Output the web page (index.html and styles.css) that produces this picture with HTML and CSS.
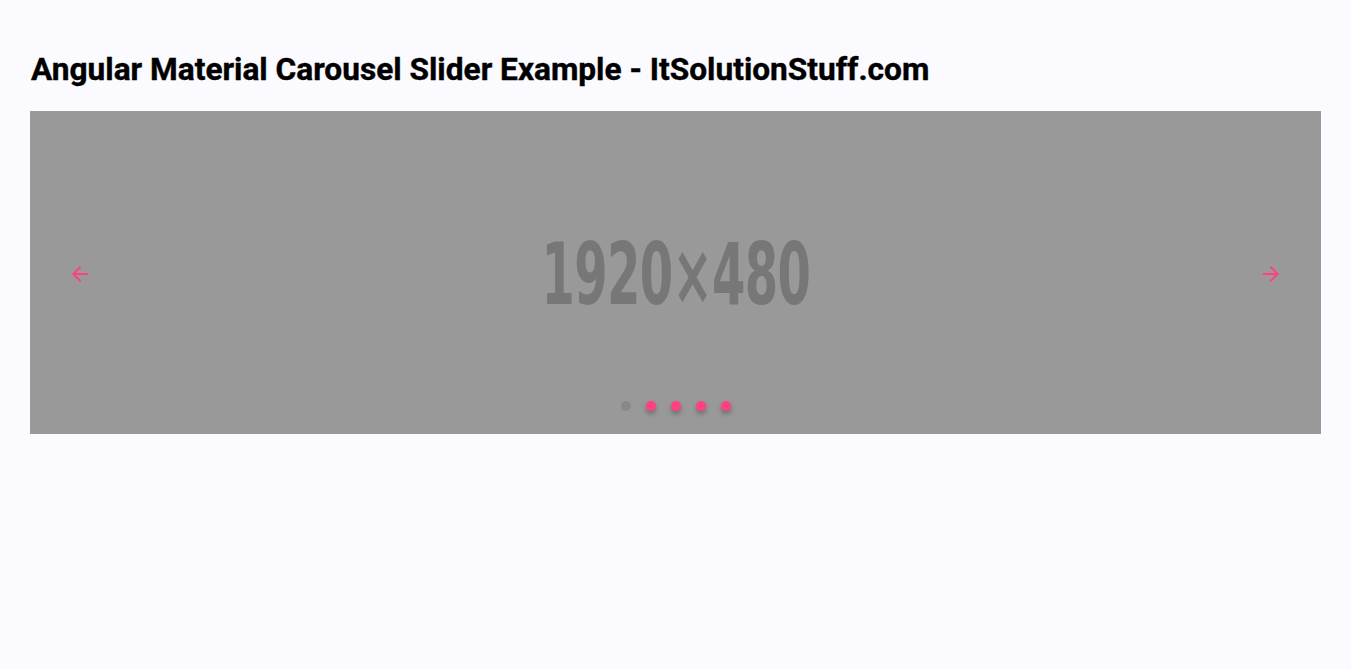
FILE: index.html
```html
<!DOCTYPE html>
<html>
<head>
<meta charset="utf-8">
<link rel="stylesheet" href="styles.css">
</head>
<body>
<div class="page">
  <h1 class="title">Angular Material Carousel Slider Example - ItSolutionStuff.com</h1>
  <div class="carousel">
    <button class="nav nav-prev" aria-label="previous">
      <svg viewBox="0 0 24 24" width="24" height="24"><path d="M20 11H7.83l5.59-5.59L12 4l-8 8 8 8 1.41-1.41L7.83 13H20v-2z" fill="#ff4081"/></svg>
    </button>
    <div class="slide-label">1920×480</div>
    <button class="nav nav-next" aria-label="next">
      <svg viewBox="0 0 24 24" width="24" height="24"><path d="M12 4l-1.41 1.41L16.170 11H4v2h12.17l-5.58 5.59L12 20l8-8z" fill="#ff4081"/></svg>
    </button>
    <div class="dots">
      <span class="dot dot-active"></span>
      <span class="dot"></span>
      <span class="dot"></span>
      <span class="dot"></span>
      <span class="dot"></span>
    </div>
  </div>
</div>
</body>
</html>
```
FILE: styles.css
```css
html, body {
  margin: 0;
  padding: 0;
  background: #fafaff;
}
.page {
  padding: 30px 30px 0 30px;
  font-family: Roboto, "Liberation Sans", sans-serif;
}
.title {
  margin: 0;
  padding: 21px 0 22px 1px;
  font-size: 31.65px;
  line-height: 38px;
  font-weight: 700;
  color: #000;
  -webkit-text-stroke: 0.4px #000;
}
.carousel {
  position: relative;
  height: 323px;
  background: #999999;
  display: flex;
  align-items: center;
  justify-content: space-between;
  padding: 0 28px;
}
.nav {
  border: 0;
  background: transparent;
  padding: 0;
  width: 44px;
  height: 44px;
  display: flex;
  align-items: center;
  justify-content: center;
  margin-top: 2px;
}
.slide-label {
  font-family: "DejaVu Sans Condensed", "DejaVu Sans", sans-serif;
  font-weight: 700;
  font-size: 86px;
  color: #777777;
  transform: scaleX(0.62);
  letter-spacing: -1px;
  margin-top: 2px;
}
.dots {
  position: absolute;
  left: 0;
  right: 0;
  bottom: 23px;
  display: flex;
  justify-content: center;
  gap: 15px;
}
.dot {
  width: 10px;
  height: 10px;
  border-radius: 50%;
  background: #ff4081;
  box-shadow: 0 3px 5px rgba(0,0,0,0.3);
}
.dot-active {
  background: #888888;
  box-shadow: none;
}
```
